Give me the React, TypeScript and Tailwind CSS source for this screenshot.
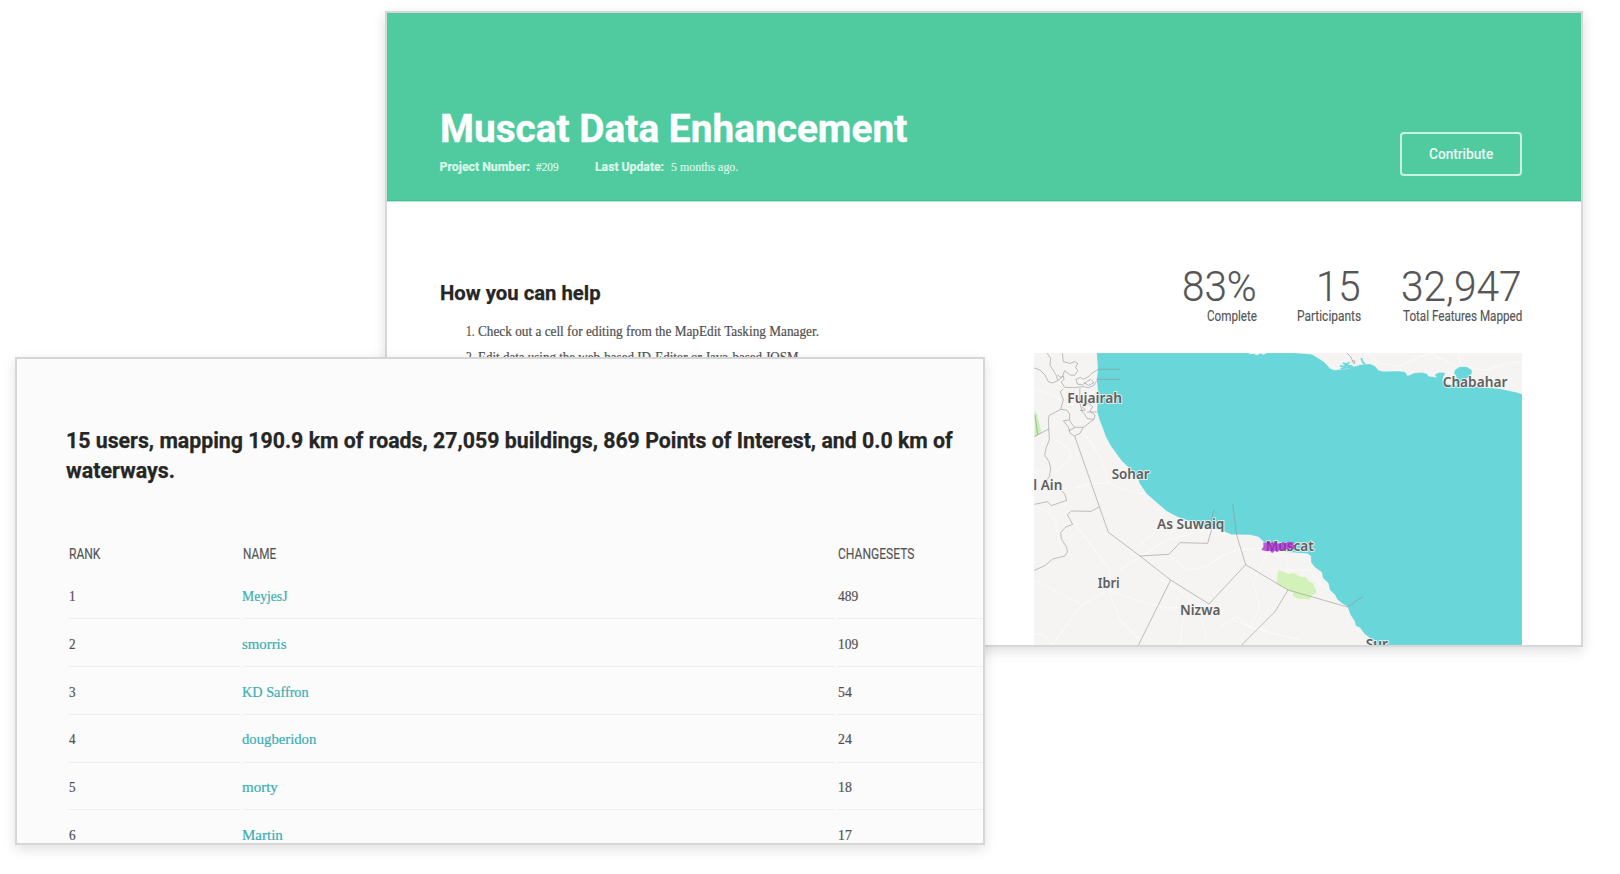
import { useLayoutEffect, useRef, useState } from "react";
import type { ReactNode } from "react";

/** Single-line text condensed or widened to take exactly `w` pixels. */
function Fit({ w, className = "", children }: { w: number; className?: string; children: ReactNode }) {
  const ref = useRef<HTMLSpanElement>(null);
  const [scale, setScale] = useState(1);
  useLayoutEffect(() => {
    if (ref.current) setScale(w / ref.current.offsetWidth);
  }, [w]);
  return (
    <span className={"inline-flex justify-start whitespace-nowrap " + className} style={{ width: w }}>
      <span ref={ref} className="inline-block flex-none origin-left" style={{ transform: `scaleX(${scale})` }}>
        {children}
      </span>
    </span>
  );
}

const stats = [
  { value: "83%", vw: 75, label: "Complete", lw: 50 },
  { value: "15", vw: 45, label: "Participants", lw: 64 },
  { value: "32,947", vw: 121, label: "Total Features Mapped", lw: 119 },
];

const users = [
  { name: "MeyjesJ", w: 45.5, changes: "489" },
  { name: "smorris", w: 44.5, changes: "109" },
  { name: "KD Saffron", w: 66.5, changes: "54" },
  { name: "dougberidon", w: 74.5, changes: "24" },
  { name: "morty", w: 36, changes: "18" },
  { name: "Martin", w: 41, changes: "17" },
];

const WATER =
  "M230 38 L233 90 L230 118 L233 150 L231 215 L238 240 L247 262 L257 290 L272 318 L292 345 L304 362 L328 385 L352 412 L358 430 L380 462 L410 488 L440 514 L470 530 L500 541 L560 562 L600 570 L634 584 L690 585 L715 591 L728 603 L760 628 L800 636 L840 640 L862 641 L872 648 L873 667 L884 682 L905 697 L908 714 L925 730 L929 750 L945 765 L951 778 L965 790 L982 800 L991 824 L1003 843 L1007 857 L1020 864 L1033 882 L1049 894 L1060 916 L1510 916 L1510 163 L1487 156 L1440 146 L1380 140 L1310 135 L1302 118 L1310 112 L1302 100 L1304 90 L1318 80 L1340 80 L1356 90 L1356 100 L1348 110 L1335 120 L1310 135 L1275 130 L1268 121 L1270 112 L1277 98 L1258 97 L1246 102 L1245 107 L1250 112 L1225 108 L1222 101 L1205 97 L1182 99 L1163 107 L1155 95 L1135 93 L1088 94 L1075 90 L1065 78 L1050 71 L1020 74 L980 86 L942 90 L930 85 L912 65 L896 55 L880 45 L872 42 L840 40 L820 38 Z";

const BORDERS = [
  "M80 38 L92 55 L90 75 L100 92 L110 108 L113 122 L98 129 L85 125 L75 105 L60 90 L43 84",
  "M127 38 L130 65 L150 70 L164 65 L173 70 L167 82 L173 92 L164 106 L150 105 L134 92 L127 110 L113 122",
  "M113 105 L122 112 L130 108 L132 118 L124 126 L134 142 L160 143 L190 140 L206 143 L222 136 L230 122",
  "M232 88 L300 88 M230 118 L300 118 M232 90 L215 100 L206 110 L190 118 L182 112 L168 118 L172 132 L187 135 L200 125 L212 118 L222 128 L206 136 L192 128",
  "M130 146 L121 155 L130 180 L122 208 L100 220 L88 226 L85 240 L88 300 L78 325 L74 345 L87 365 L92 385 L88 410 L80 420",
  "M122 208 L140 210 L149 222 L148 240 L130 242 L146 262 L150 280 L164 288 L180 280 L190 262 L222 238 L225 225 L210 214 L218 200 L205 190",
  "M164 262 L190 262 M148 240 L164 264 L146 272 M180 190 L186 214 L196 226 L202 236 L222 238 M186 200 L196 210 L180 212 M202 216 L230 216 M180 145 L178 185 L205 190",
  "M164 288 L238 500 L265 577 L360 648 L452 720 L567 792 L677 674 L804 750 L982 801 L1030 769",
  "M43 290 L88 266 M125 452 L134 462 L140 481 L94 497 L82 485 L43 493",
  "M238 500 L214 514 L154 513 L142 524 L158 553 L136 562 L122 578 L124 596 L140 622 L142 636 L134 648 L98 657 L76 676 L43 691",
  "M360 648 L447 643 L480 608 L563 610 L575 568 L574 545 L582 508",
  "M638 492 L650 585 L677 674",
  "M452 720 L355 916",
  "M804 750 L765 815 L664 916",
  "M980 38 L992 50 L1002 72 M995 64 L1004 62 L1004 72",
];

const ROADS = [
  "M43 150 Q90 155 122 180 M43 400 Q70 380 90 400 M110 300 L150 330 L150 360 L110 395",
  "M200 290 Q250 350 265 430 Q340 460 380 462 M160 445 L215 430 L265 430 L290 400",
  "M43 500 Q110 520 110 570 L130 640 M160 545 L270 690 L265 750 L180 800 L100 910 M265 750 L300 840 L360 900",
  "M43 720 Q120 760 180 790 M300 690 L360 650 L440 600 L560 570 L640 584 M265 750 Q340 780 440 805 L550 795",
  "M430 520 L400 580 L350 620 M440 640 L500 690 L560 680 L600 650 L650 630 L720 625",
  "M420 720 Q540 760 560 900 M490 830 L480 916 M640 840 L690 860 L720 800 L700 730 L740 640",
  "M740 640 L800 650 L800 690 L870 690 L900 740 M690 860 L760 880 L840 900 M600 860 L650 830 L690 860",
  "M43 880 L80 890 L100 916 M885 700 L900 730 L940 760",
  "M1040 38 L1075 70 L1140 78 L1200 50 L1240 40 M1240 45 L1300 75 L1400 90 L1460 70 L1506 66 M1318 38 L1320 80",
];

const LABELS = [
  { x: 142, y: 190, w: 164, t: "Fujairah" },
  { x: 275, y: 416, w: 114, t: "Sohar" },
  { x: 40, y: 451, w: 87, t: "l Ain" },
  { x: 411, y: 567, w: 202, t: "As Suwaiq" },
  { x: 737, y: 633, w: 144, t: "Muscat" },
  { x: 233, y: 743, w: 66, t: "Ibri" },
  { x: 480, y: 826, w: 121, t: "Nizwa" },
  { x: 1268, y: 140, w: 194, t: "Chabahar" },
  { x: 1037, y: 928, w: 67, t: "Sur" },
];

function CoastMap() {
  return (
    <svg className="block h-[292px] w-[488px] bg-[#f5f4f3]" viewBox="42 39 1464 876">
      <path d={ROADS.join(" ")} fill="none" stroke="#ffffff" strokeWidth="3.5" strokeOpacity=".5" />
      <path d="M44 210 L52 225 L64 278 L44 290 Z" fill="#cdeeb5" />
      <path d="M45 225 L53 284" stroke="#8fc48c" strokeWidth="3" />
      <path
        d="M774 691 L790 695 L806 702 L822 698 L840 710 L858 712 L866 724 L880 730 L890 757 L874 768 L868 779 L850 776 L834 776 L818 768 L820 758 L804 750 L770 732 Z"
        fill="#d3f2ba"
      />
      <path d={WATER} fill="#69d6d9" stroke="#ffffff" strokeOpacity=".6" strokeWidth="2" />
      <path d="M686 39 L690 43 L700 41 L712 46 L722 40 L730 44 L740 39 Z" fill="#f5f4f3" />
      <path
        d="M962 88 L976 76 L996 78 M960 78 L974 80 L988 66 M968 70 L986 72 M1024 54 L1028 66 L1036 74 M962 86 L1000 80"
        fill="none"
        stroke="#69d6d9"
        strokeWidth="5"
      />
      <path d={BORDERS.join(" ")} fill="none" stroke="#8f8f92" strokeOpacity=".68" strokeWidth="2.5" strokeLinejoin="round" />
      <g
        className="font-['Noto_Sans',sans-serif] text-[42px] font-semibold"
        fill="#5f5f60"
        stroke="#f4f4f4"
        strokeOpacity=".8"
        strokeWidth="6"
        strokeLinejoin="round"
        paintOrder="stroke"
      >
        {LABELS.map((l) => (
          <text key={l.t} x={l.x} y={l.y} textLength={l.w} lengthAdjust="spacingAndGlyphs">
            {l.t}
          </text>
        ))}
      </g>
      <path
        d="M730 607 L738 609 L744 603 L750 609 L758 606 L764 610 L770 610 L780 612 L788 606 L798 608 L806 605 L822 607 L820 614 L830 618 L822 622 L824 629 L812 624 L806 630 L796 627 L788 633 L780 630 L772 637 L766 632 L756 640 L750 632 L740 634 L724 630 L730 620 Z"
        fill="#a91fcf"
        fillOpacity=".72"
      />
    </svg>
  );
}

function ProjectWindow() {
  return (
    <section className="absolute left-[385px] top-[11px] h-[636px] w-[1198px] overflow-hidden border-2 border-[#d6d8d8] bg-white shadow-[0_4px_12px_rgba(0,0,0,0.13)]">
      <header className="flex h-[188px] items-start justify-between border-b border-[#45bd90] bg-[#50cb9f] pl-[52.5px] pr-[59px] shadow-[0_1px_0_#b4ecd5]">
        <div className="pt-[94px] text-white">
          <h1 className="flex text-[39.5px] font-bold leading-[44px] [-webkit-text-stroke:0.4px_white]">
            <Fit w={467.5}>Muscat Data Enhancement</Fit>
          </h1>
          <p className="mt-[7.5px] flex text-[12.3px] leading-4 text-[#dcf8ec]">
            <Fit w={90} className="font-bold [-webkit-text-stroke:0.2px_#dcf8ec]">Project Number:</Fit>
            <Fit w={23} className="ml-[6px] font-['Liberation_Serif',serif] [-webkit-text-stroke:0.2px_#dcf8ec]">#209</Fit>
            <Fit w={69.5} className="ml-[36.5px] font-bold [-webkit-text-stroke:0.2px_#dcf8ec]">Last Update:</Fit>
            <Fit w={67} className="ml-[6px] font-['Liberation_Serif',serif] [-webkit-text-stroke:0.2px_#dcf8ec]">5 months ago.</Fit>
          </p>
        </div>
        <button className="mt-[119px] flex h-[44px] w-[122px] items-center justify-center rounded border-2 border-[#c8f3e0] pt-px text-[14.5px] font-medium leading-5 text-[#effcf6]">
          <Fit w={64}>Contribute</Fit>
        </button>
      </header>
      <div className="flex justify-between pl-[52.5px] pr-[59px]">
        <div className="pt-[78px]">
          <h2 className="flex text-[20.8px] font-bold leading-7 text-[#262626] [-webkit-text-stroke:0.25px_#262626]">
            <Fit w={161}>How you can help</Fit>
          </h2>
          <ol className="mt-[12px] pl-[26.5px] font-['Liberation_Serif',serif] text-[14px] leading-[26px] text-[#505050] [-webkit-text-stroke:0.2px_#505050]">
            <li className="flex">
              <Fit w={9} className="mr-[3px]">1.</Fit>
              <Fit w={341}>Check out a cell for editing from the MapEdit Tasking Manager.</Fit>
            </li>
            <li className="flex">
              <Fit w={9} className="mr-[3px]">2.</Fit>
              <Fit w={324}>Edit data using the web-based ID-Editor or Java-based JOSM.</Fit>
            </li>
          </ol>
        </div>
        <div className="w-[488px] pt-[64px] text-[#555]">
          <dl className="flex justify-end gap-[40px] [-webkit-text-stroke:0.15px_#555]">
            {stats.map((s) => (
              <div key={s.label} className="flex flex-col items-end">
                <dd className="flex text-[42px] font-light leading-[44px]">
                  <Fit w={s.vw}>{s.value}</Fit>
                </dd>
                <dt className="-mt-[3px] flex text-[14px] leading-5">
                  <Fit w={s.lw}>{s.label}</Fit>
                </dt>
              </div>
            ))}
          </dl>
          <div className="mt-[27px]">
            <CoastMap />
          </div>
        </div>
      </div>
    </section>
  );
}

const COLS = "grid grid-cols-[172px_592.5px_146px] gap-x-[2.5px]";
const CELL = "border-b border-[#efefef] pt-[14.5px]";

function UsersWindow() {
  return (
    <section className="absolute left-[15px] top-[357px] h-[488px] w-[970px] overflow-hidden border-2 border-[#d6d6d6] bg-[#fbfbfb] pl-[49px] pt-[67px] shadow-[0_4px_12px_rgba(0,0,0,0.13)]">
      <h2 className="flex flex-col text-[21.8px] font-bold leading-[30px] text-[#262626] [-webkit-text-stroke:0.25px_#262626]">
        <Fit w={886.5}>15 users, mapping 190.9 km of roads, 27,059 buildings, 869 Points of Interest, and 0.0 km of</Fit>
        <Fit w={109}>waterways.</Fit>
      </h2>
      <div className={COLS + " mt-[58px] h-[27.5px] pl-[2px] text-[15.3px] leading-5 text-[#555] [-webkit-text-stroke:0.15px_#555]"}>
        <Fit w={31.5} className="pl-px">RANK</Fit>
        <Fit w={33}>NAME</Fit>
        <Fit w={76.5} className="pl-[0.5px]">CHANGESETS</Fit>
      </div>
      {users.map((u, i) => (
        <div
          key={u.name}
          className={COLS + " h-[47.75px] pl-[2px] font-['Liberation_Serif',serif] text-[15px] leading-5 text-[#505050] [-webkit-text-stroke:0.2px_currentColor]"}
        >
          <div className={CELL}>
            <Fit w={7} className="pl-[0.5px]">{i + 1}</Fit>
          </div>
          <div className={CELL + " text-[#3aaeb1] [-webkit-text-stroke:0.2px_#3aaeb1]"}>
            <Fit w={u.w} className="-ml-[0.5px]">{u.name}</Fit>
          </div>
          <div className={CELL}>
            <Fit w={u.changes.length * 6.9}>{u.changes}</Fit>
          </div>
        </div>
      ))}
    </section>
  );
}

export default function App() {
  return (
    <main className="relative h-[874px] w-[1620px] overflow-hidden bg-white font-['Roboto',sans-serif]">
      <ProjectWindow />
      <UsersWindow />
    </main>
  );
}
